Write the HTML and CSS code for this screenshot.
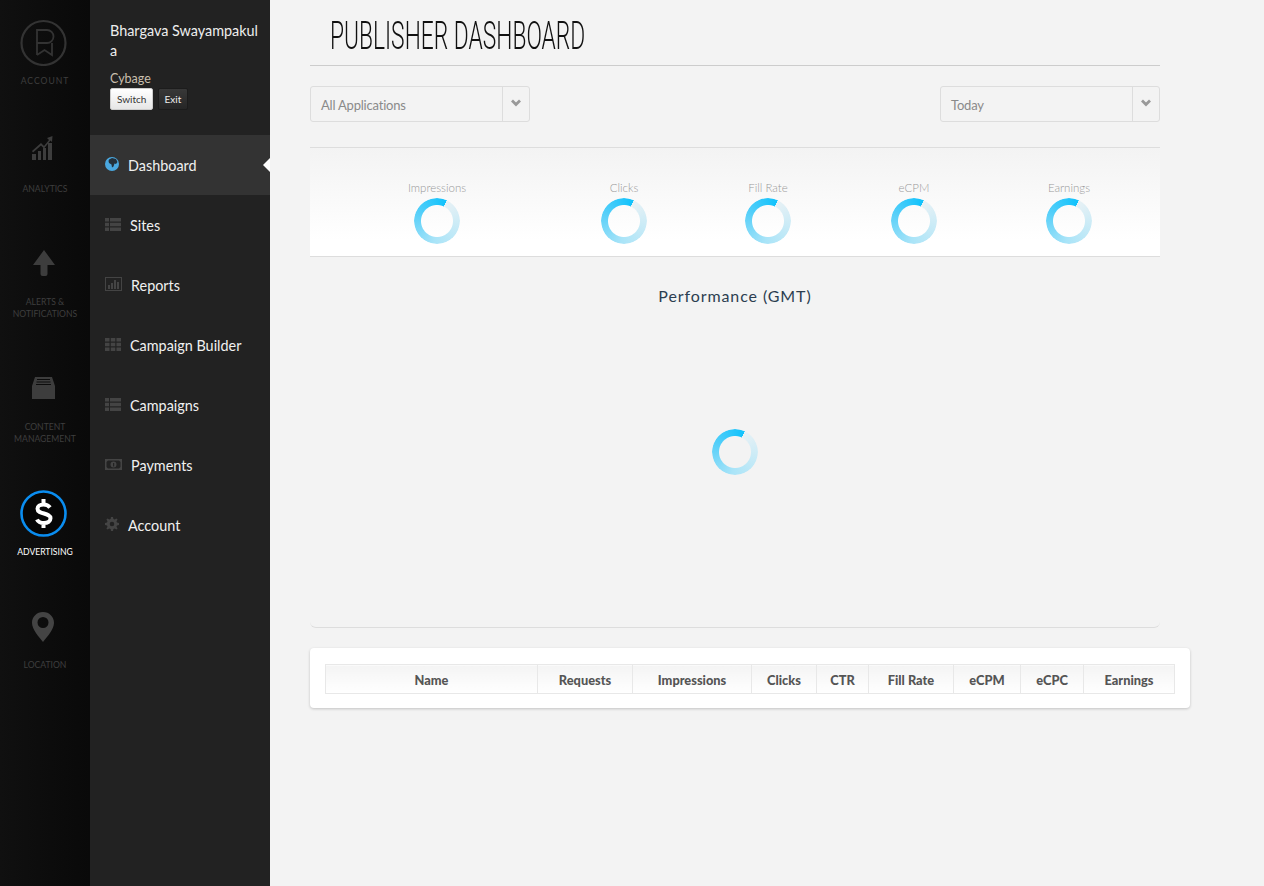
FILE: index.html
```html
<!DOCTYPE html>
<html lang="en">
<head>
  <meta charset="UTF-8">
  <title>Publisher Dashboard</title>
  <link rel="stylesheet" href="styles.css">
</head>
<body>
  <nav class="rail">
    <a class="rail-item rail-account">
      <svg class="rail-icon" viewBox="0 0 47 47"><circle cx="23.500" cy="24" r="22" fill="none" stroke="#333" stroke-width="2.200"/><path d="M17 36V11h10a6.500 6.500 0 0 1 0 13H17M17 36l7.500-5 7.500 5V24" fill="none" stroke="#333" stroke-width="1.800"/></svg>
      <span class="rail-label rail-label-wide">ACCOUNT</span>
    </a>
    <a class="rail-item">
      <svg class="rail-icon" viewBox="0 0 47 47"><path d="M12 24l9-8 3 3 5-6-2-2 5.500-2-.5 6-1.500-1.500-6.500 8-3-3-8 7z" fill="#3d3d3d"/><path d="M12 27h4v6h-4zM18 24h3v9h-3zM23 21h3v12h-3zM28 16h4v17h-4z" fill="#3d3d3d"/></svg>
      <span class="rail-label">ANALYTICS</span>
    </a>
    <a class="rail-item">
      <svg class="rail-icon" viewBox="0 0 47 47"><path d="M24 10l11 15h-7.500v9a2 2 0 0 1-2 2h-3a2 2 0 0 1-2-2v-9H13z" fill="#3d3d3d"/></svg>
      <span class="rail-label">ALERTS &amp;<br>NOTIFICATIONS</span>
    </a>
    <a class="rail-item">
      <svg class="rail-icon" viewBox="0 0 47 47"><path d="M15 12h17l3 9v13H12V21z" fill="#3d3d3d"/><path d="M17 14.500h13M16.500 17h14M16 19.500h15" stroke="#0c0c0c" fill="none"/></svg>
      <span class="rail-label">CONTENT<br>MANAGEMENT</span>
    </a>
    <a class="rail-item is-active">
      <svg class="rail-icon" viewBox="0 0 47 47"><circle cx="23.500" cy="23.500" r="22" fill="#060606" stroke="#0a8df0" stroke-width="2.600"/><path d="M30 17.500c-1.500-2-3.800-3-6.500-3-3.500 0-6 1.700-6 4.300 0 6 13 3.500 13 9.500 0 3-2.800 4.700-6.500 4.700-3.300 0-6-1.300-7-3.500M23.500 9v5M23.500 33v5" fill="none" stroke="#fff" stroke-width="4"/></svg>
      <span class="rail-label">ADVERTISING</span>
    </a>
    <a class="rail-item">
      <svg class="rail-icon" viewBox="0 0 47 47"><path fill-rule="evenodd" d="M23 9c6.200 0 11 4.800 11 10.800 0 6.500-6.500 13.700-11 19.200-4.500-5.500-11-12.700-11-19.200C12 13.800 16.800 9 23 9zm0 5a5.500 5.500 0 1 0 0 11 5.500 5.500 0 0 0 0-11z" fill="#444"/></svg>
      <span class="rail-label">LOCATION</span>
    </a>
  </nav>

  <aside class="sidebar">
    <div class="user">
      <div class="user-name">Bhargava Swayampakula</div>
      <div class="user-org">Cybage</div>
      <div class="user-actions">
        <button class="btn btn-light">Switch</button>
        <button class="btn btn-dark">Exit</button>
      </div>
    </div>
    <ul class="menu">
      <li class="menu-item is-current">
        <svg class="menu-icon" viewBox="0 0 14 14" width="14" height="14"><circle cx="7" cy="7" r="7" fill="#4aa8e0"/><path d="M4 2.500l3-1.500 4 1 1.500 3-1.500 2-1.500-.5-1 3-1.500 1-.5-3-2.500-1.500-.5-2z" fill="#24303a"/></svg>
        <span>Dashboard</span>
      </li>
      <li class="menu-item">
        <svg class="menu-icon" viewBox="0 0 16 13" width="16" height="13"><path d="M0 0h4v3.500H0zM5 0h11v3.500H5zM0 4.800h4v3.500H0zM5 4.800h11v3.500H5zM0 9.500h4V13H0zM5 9.500h11V13H5z" fill="#444"/></svg>
        <span>Sites</span>
      </li>
      <li class="menu-item">
        <svg class="menu-icon" viewBox="0 0 17 14" width="17" height="14"><rect x=".5" y=".5" width="16" height="13" fill="none" stroke="#444"/><path d="M3 8h2v4H3zM6 6h2v6H6zM9 3h2v9H9zM12 5h2v7h-2z" fill="#444"/></svg>
        <span>Reports</span>
      </li>
      <li class="menu-item">
        <svg class="menu-icon" viewBox="0 0 16 13" width="16" height="13"><path d="M0 0h4.500v3.500H0zM5.800 0h4.500v3.500H5.800zM11.500 0H16v3.500h-4.500zM0 4.800h4.500v3.500H0zM5.800 4.800h4.500v3.500H5.800zM11.500 4.800H16v3.500h-4.500zM0 9.500h4.500V13H0zM5.800 9.500h4.500V13H5.800zM11.500 9.500H16V13h-4.500z" fill="#444"/></svg>
        <span>Campaign Builder</span>
      </li>
      <li class="menu-item">
        <svg class="menu-icon" viewBox="0 0 16 13" width="16" height="13"><path d="M0 0h4v3.500H0zM5 0h11v3.500H5zM0 4.800h4v3.500H0zM5 4.800h11v3.500H5zM0 9.500h4V13H0zM5 9.500h11V13H5z" fill="#444"/></svg>
        <span>Campaigns</span>
      </li>
      <li class="menu-item">
        <svg class="menu-icon" viewBox="0 0 17 11" width="17" height="11"><path fill-rule="evenodd" d="M0 0h17v11H0zM3 1.500L1.500 3v5L3 9.500h11L15.500 8V3L14 1.500zM8.500 2.500a3 3 0 1 1 0 6 3 3 0 0 1 0-6z" fill="#444"/><path d="M8 4h1.200v3.500H8z" fill="#222"/></svg>
        <span>Payments</span>
      </li>
      <li class="menu-item">
        <svg class="menu-icon" viewBox="0 0 14 14" width="14" height="14"><path fill-rule="evenodd" d="M6 0h2l.4 2 1.300.5L11.400 1.400l1.200 1.200-1.100 1.700.5 1.300 2 .4v2l-2 .4-.5 1.300 1.100 1.700-1.200 1.200-1.700-1.100-1.300.5L8 14H6l-.4-2-1.300-.5-1.700 1.100-1.200-1.200 1.100-1.700L2 8.400 0 8V6l2-.4.5-1.300-1.100-1.700 1.200-1.200 1.700 1.100L5.600 2zM7 4.700a2.300 2.300 0 1 0 0 4.600 2.300 2.300 0 0 0 0-4.600z" fill="#444"/></svg>
        <span>Account</span>
      </li>
    </ul>
  </aside>

  <main class="main">
    <div class="content">
      <h1 class="page-title"><span>PUBLISHER DASHBOARD</span></h1>

      <div class="filters">
        <div class="select"><span class="select-text">All Applications</span><span class="select-arrow"><svg viewBox="0 0 12 8" width="12" height="8"><path d="M2 1.500L6 5.500l4-4" fill="none" stroke="#999" stroke-width="2.800"/></svg></span></div>
        <div class="select"><span class="select-text">Today</span><span class="select-arrow"><svg viewBox="0 0 12 8" width="12" height="8"><path d="M2 1.500L6 5.500l4-4" fill="none" stroke="#999" stroke-width="2.800"/></svg></span></div>
      </div>

      <section class="stats">
        <div class="stat"><div class="stat-label">Impressions</div><div class="spinner"></div></div>
        <div class="stat"><div class="stat-label">Clicks</div><div class="spinner"></div></div>
        <div class="stat"><div class="stat-label">Fill Rate</div><div class="spinner"></div></div>
        <div class="stat"><div class="stat-label">eCPM</div><div class="spinner"></div></div>
        <div class="stat"><div class="stat-label">Earnings</div><div class="spinner"></div></div>
      </section>

      <section class="chart">
        <h2 class="chart-title">Performance (GMT)</h2>
        <div class="chart-body"><div class="spinner"></div></div>
      </section>
    </div>

    <section class="table-card">
      <table class="data-table">
        <thead>
          <tr>
            <th>Name</th>
            <th>Requests</th>
            <th>Impressions</th>
            <th>Clicks</th>
            <th>CTR</th>
            <th>Fill Rate</th>
            <th>eCPM</th>
            <th>eCPC</th>
            <th>Earnings</th>
          </tr>
        </thead>
      </table>
    </section>
  </main>
</body>
</html>
```

FILE: styles.css
```css
body {
  margin: 0;
  min-height: 886px;
  display: flex;
  background: #f3f3f3;
  font-family: "Lato", "Open Sans", sans-serif;
}

/* far left rail */
.rail {
  width: 90px;
  flex: none;
  box-sizing: border-box;
  padding-top: 19px;
  background: linear-gradient(to right, #101010, #090909);
}
.rail-item {
  display: block;
  margin-bottom: 45px;
  text-align: center;
}
.rail-account {
  margin-bottom: 40px;
}
.rail-icon {
  display: block;
  width: 47px;
  height: 47px;
  margin: 0 auto 9px 20px;
}
.rail-label {
  display: block;
  font-size: 8.600px;
  line-height: 12px;
  color: #3e3e3e;
}
.rail-label-wide {
  letter-spacing: 1px;
}
.is-active .rail-label {
  color: #fff;
}

/* second column */
.sidebar {
  width: 180px;
  flex: none;
  background: #222;
  color: #eee;
}
.user {
  height: 135px;
  box-sizing: border-box;
  padding: 21px 8px 0 20px;
}
.user-name {
  font-size: 14.400px;
  line-height: 20px;
  word-break: break-all;
}
.user-org {
  margin-top: 10px;
  font-size: 12.500px;
  line-height: 16px;
  color: #c9bfae;
}
.btn {
  height: 22px;
  padding: 0 6px;
  border-radius: 2px;
  font-family: inherit;
  font-size: 10px;
}
.btn-light {
  background: linear-gradient(#fff, #e6e6e6);
  border: 1px solid #ccc;
  color: #333;
}
.btn-dark {
  background: linear-gradient(#383838, #262626);
  border: 1px solid #1c1c1c;
  color: #eee;
}
.menu {
  list-style: none;
  margin: 0;
  padding: 0;
}
.menu-item {
  position: relative;
  height: 60px;
  box-sizing: border-box;
  padding: 1px 0 0 15px;
  display: flex;
  align-items: center;
  gap: 9px;
  font-size: 14.400px;
  color: #f0f0f0;
}
.menu-icon {
  flex: none;
  margin-top: -3px;
}
.is-current {
  background: #333;
}
.is-current::after {
  content: "";
  position: absolute;
  right: 0;
  top: 23px;
  border: 7px solid transparent;
  border-right-color: #fff;
  border-left-width: 0;
}

/* main area */
.main {
  flex: 1;
  padding-left: 40px;
}
.content {
  width: 850px;
}
.page-title {
  height: 66px;
  box-sizing: border-box;
  margin: 0;
  padding: 15px 0 0 20px;
  border-bottom: 1px solid #ccc;
  font-family: "Roboto", sans-serif;
  font-size: 38px;
  font-weight: 300;
  line-height: 42px;
  color: #111;
}
.page-title span {
  display: inline-block;
  transform: scaleX(.6);
  transform-origin: left center;
  white-space: nowrap;
}
.filters {
  display: flex;
  justify-content: space-between;
  padding: 20px 0 25px;
}
.select {
  width: 220px;
  height: 36px;
  box-sizing: border-box;
  display: flex;
  border: 1px solid #ddd;
  border-radius: 3px;
}
.select-text {
  flex: 1;
  padding: 0 10px;
  font-size: 13px;
  line-height: 37px;
  letter-spacing: -.2px;
  color: #8a8a8a;
}
.select-arrow {
  width: 27px;
  display: flex;
  justify-content: center;
  padding-top: 12px;
  box-sizing: border-box;
  border-left: 1px solid #ddd;
}
.select-arrow svg {
  display: block;
}

.stats {
  height: 110px;
  box-sizing: border-box;
  display: grid;
  grid-template-columns: 254px 120px 168px 124px 186px;
  padding-top: 33px;
  border-top: 1px solid #ddd;
  border-bottom: 1px solid #ddd;
  background: linear-gradient(#f3f3f3, #fff 85%);
}
.stat {
  display: flex;
  flex-direction: column;
  align-items: center;
}
.stat-label {
  margin-bottom: 3px;
  font-size: 11.500px;
  font-weight: 300;
  line-height: 14px;
  color: #999;
}
.spinner {
  width: 46px;
  height: 46px;
  border-radius: 50%;
  background: conic-gradient(from 25deg, #e8f1f5, #a9e4f8 45%, #55cff9 75%, #10c2fc);
  -webkit-mask: radial-gradient(circle, transparent 15.500px, #000 16.500px);
  mask: radial-gradient(circle, transparent 15.500px, #000 16.500px);
}

.chart {
  height: 371px;
  box-sizing: border-box;
  border-bottom: 1px solid #ddd;
  border-radius: 0 0 6px 6px;
}
.chart-title {
  margin: 0;
  padding-top: 29px;
  text-align: center;
  font-size: 16px;
  font-weight: 400;
  line-height: 20px;
  letter-spacing: .9px;
  color: #2c3e50;
}
.chart-body {
  display: flex;
  justify-content: center;
  padding-top: 123px;
}

.table-card {
  width: 880px;
  height: 60px;
  box-sizing: border-box;
  margin-top: 20px;
  padding: 16px 15px 14px;
  background: #fff;
  border-radius: 4px;
  box-shadow: 0 1px 3px rgba(0,0,0,0.2);
}
.data-table {
  width: 850px;
  table-layout: fixed;
  border-collapse: collapse;
}
.data-table th {
  box-sizing: border-box;
  height: 29px;
  padding: 1px 0 0;
  border: 1px solid #e8e8e8;
  background: linear-gradient(#f4f4f4, #fff);
  font-size: 12.800px;
  font-weight: 900;
  color: #555;
}
.data-table th:nth-child(1) { width: 212px; }
.data-table th:nth-child(2) { width: 95px; }
.data-table th:nth-child(3) { width: 119px; }
.data-table th:nth-child(4) { width: 65px; }
.data-table th:nth-child(5) { width: 52px; }
.data-table th:nth-child(6) { width: 85px; }
.data-table th:nth-child(7) { width: 67px; }
.data-table th:nth-child(8) { width: 63px; }
```
